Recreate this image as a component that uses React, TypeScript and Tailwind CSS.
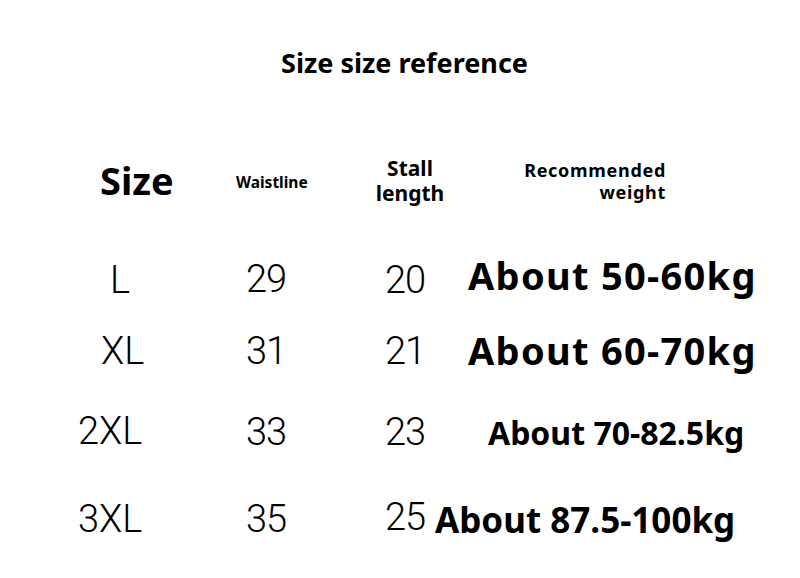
import React from "react";

const bold = { fontFamily: '"Noto Sans", "Open Sans", sans-serif' };
const thin = { fontFamily: 'Roboto, "Noto Sans", sans-serif' };

export default function App() {
  return (
    <div className="w-[800px] h-[578px] bg-white text-black overflow-hidden flex flex-col" style={bold}>
      <div className="pt-[47px] h-[155px] flex justify-start">
        <div className="pl-[281px] text-[27px] leading-[32px] font-bold">Size size reference</div>
      </div>

      {/* header */}
      <div className="flex items-start h-[100px]">
        <div className="w-[230px] pl-[100px] mt-[6px] text-[38px] leading-none font-bold">Size</div>
        <div className="w-[140px] pl-[6px] mt-[20px] text-[15.5px] leading-none font-bold">Waistline</div>
        <div className="w-[80px] mt-[1px] flex flex-col gap-[1px] items-center text-[21px] leading-[24px] font-bold">
          <div>Stall</div>
          <div>length</div>
        </div>
        <div className="w-[216px] mt-[4px] text-right text-[18px] leading-[22px] font-bold tracking-[0.7px]">
          <div>Recommended</div>
          <div>weight</div>
        </div>
      </div>

      {/* row L */}
      <div className="flex items-start h-[75px]">
        <div className="w-[246px] pl-[110px] mt-[6px] text-[38px] leading-none font-light" style={thin}>L</div>
        <div className="w-[139px] mt-[5px] text-[38px] leading-none font-light tracking-[-1px]" style={thin}>29</div>
        <div className="w-[48px] mt-[6px] text-[38px] leading-none font-light tracking-[-1px]" style={thin}>20</div>
        <div className="pl-[35px] mt-[1px] text-[38px] leading-none font-bold tracking-[1.3px] whitespace-nowrap">About 50-60kg</div>
      </div>

      {/* row XL */}
      <div className="flex items-start h-[75px]">
        <div className="w-[246px] pl-[101px] mt-[2px] text-[38px] leading-none font-light" style={thin}>XL</div>
        <div className="w-[139px] mt-[2px] text-[38px] leading-none font-light tracking-[-1px]" style={thin}>31</div>
        <div className="w-[48px] mt-[2px] text-[38px] leading-none font-light tracking-[-1px]" style={thin}>21</div>
        <div className="pl-[35px] mt-[1px] text-[38px] leading-none font-bold tracking-[1.3px] whitespace-nowrap">About 60-70kg</div>
      </div>

      {/* row 2XL */}
      <div className="flex items-start h-[85px]">
        <div className="w-[246px] pl-[78px] mt-[7px] text-[38px] leading-none font-light" style={thin}>2XL</div>
        <div className="w-[139px] mt-[8px] text-[38px] leading-none font-light tracking-[-1px]" style={thin}>33</div>
        <div className="w-[48px] mt-[8px] text-[38px] leading-none font-light tracking-[-1px]" style={thin}>23</div>
        <div className="pl-[55px] mt-[12px] text-[32px] leading-none font-bold whitespace-nowrap">About 70-82.5kg</div>
      </div>

      {/* row 3XL */}
      <div className="flex items-start flex-1">
        <div className="w-[246px] pl-[78px] mt-[10px] text-[38px] leading-none font-light" style={thin}>3XL</div>
        <div className="w-[139px] mt-[10px] text-[38px] leading-none font-light tracking-[-1px]" style={thin}>35</div>
        <div className="w-[48px] mt-[8px] text-[38px] leading-none font-light tracking-[-1px]" style={thin}>25</div>
        <div className="pl-[2px] mt-[12px] text-[35px] leading-none font-bold whitespace-nowrap">About 87.5-100kg</div>
      </div>
    </div>
  );
}
